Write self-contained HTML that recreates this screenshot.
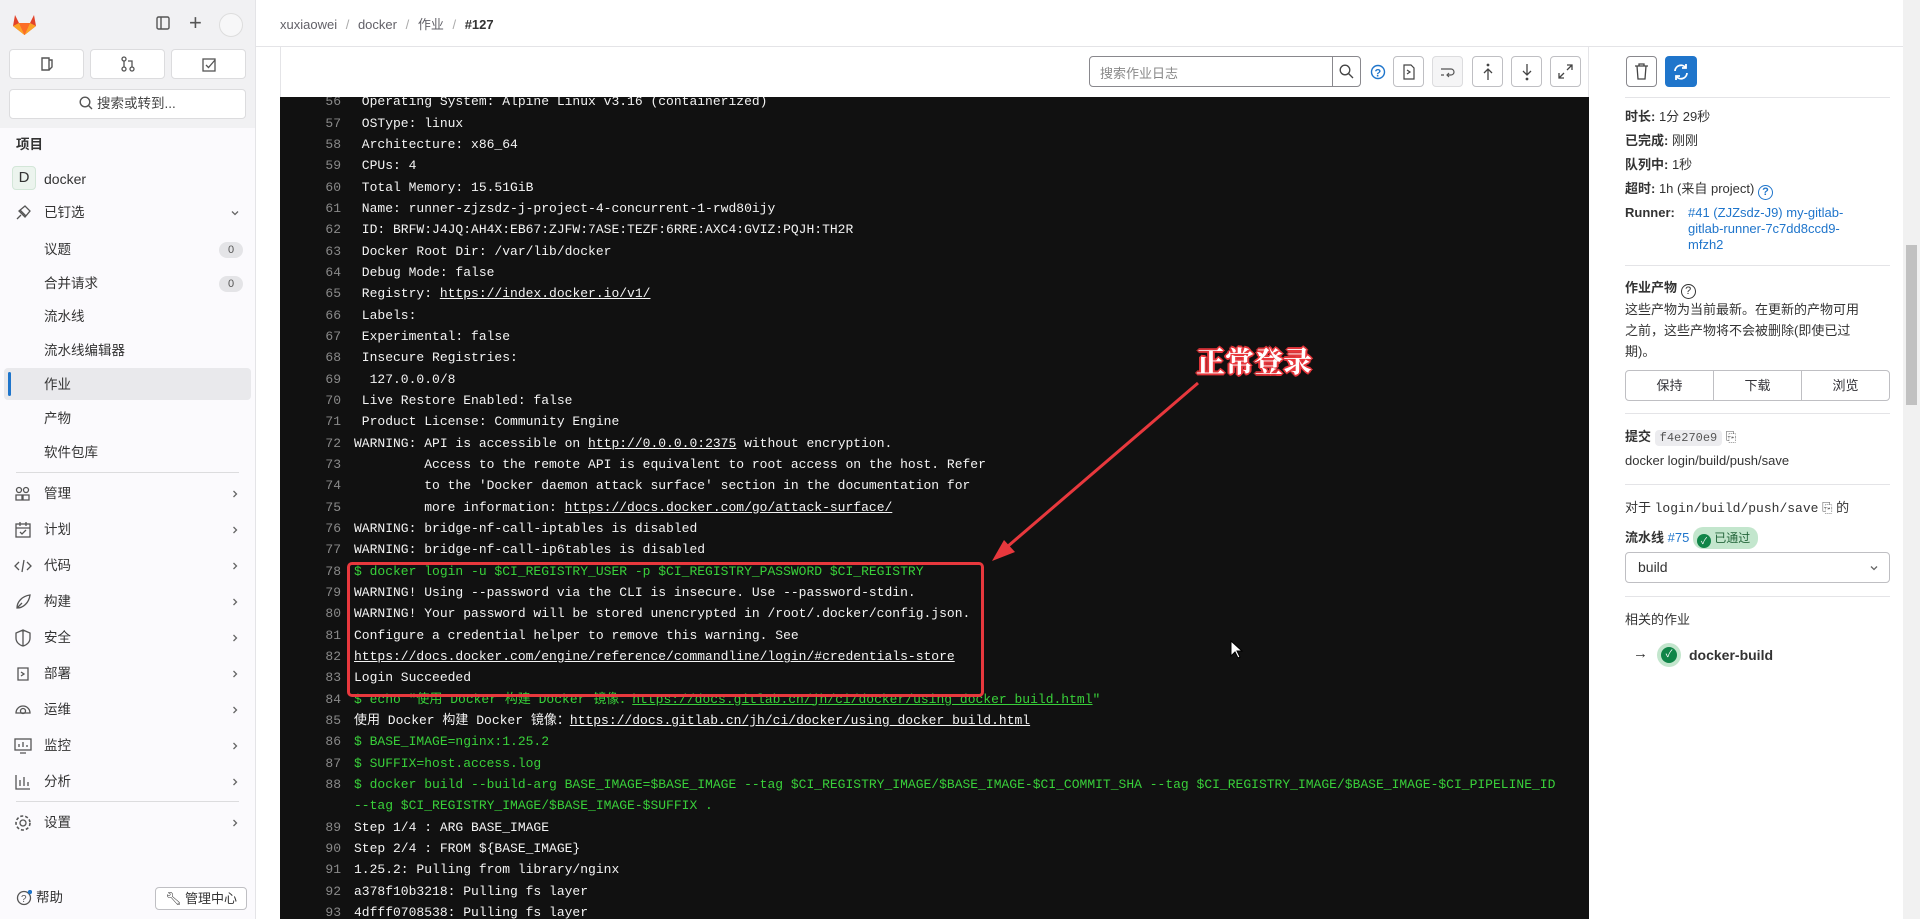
<!DOCTYPE html>
<html><head><meta charset="utf-8">
<style>
*{box-sizing:border-box;margin:0;padding:0}
body{width:1920px;height:919px;overflow:hidden;background:#fff;font-family:"Liberation Sans","Noto Sans CJK SC",sans-serif;color:#333238;font-size:14px;position:relative}
.abs{position:absolute}
#side{left:0;top:0;width:256px;height:919px;background:#fbfafd;border-right:1px solid #e4e4e7}
#sidetop{left:0;top:0;width:255px;height:128px;background:#f1f1f3}
.btn3{position:absolute;top:49px;height:30px;width:75px;background:#fff;border:1px solid #dcdcde;border-radius:4px}
.nav{position:absolute;left:44px;font-size:13.5px;color:#333;line-height:20px}
.ico{position:absolute;left:14px;width:18px;height:18px}
.chev{position:absolute;left:230px;width:10px;height:10px}
.badge{position:absolute;left:219px;width:24px;height:16px;border-radius:8px;background:#e4e4e7;font-size:11px;text-align:center;line-height:16px;color:#555}
#log{left:280px;top:97px;width:1309px;height:822px;background:#111;overflow:hidden;font-family:"Liberation Mono","Noto Sans CJK SC",monospace;font-size:13px;color:#f4f4f4}
.l{position:absolute;left:0;height:21.33px;line-height:21.33px;white-space:pre;width:1309px}
.n{position:absolute;left:0;width:61px;text-align:right;color:#8a8a8a}
.t{position:absolute;left:74px}
.g{color:#39d03a}
u{text-decoration:underline}
.tb{position:absolute;top:56px;width:31px;height:31px;border:1px solid #bfbfc3;border-radius:4px;background:#fff}
.rp{position:absolute;left:1625px;font-size:13px;color:#333;line-height:20px}
.div{position:absolute;left:1625px;width:265px;height:1px;background:#e4e4e7}
</style></head><body>
<div id="side" class="abs"></div>
<div id="sidetop" class="abs"></div>
<svg class="abs" style="left:12px;top:12px" width="25" height="24" viewBox="0 0 25 24"><path d="M12.5 23 L1 14 L3 3 L7 11 H18 L22 3 L24 14Z" fill="#e24329"/><path d="M12.5 23 L7 11 H18Z" fill="#fc6d26"/><path d="M1 14 L7 11 L12.5 23Z M24 14 L18 11 L12.5 23Z" fill="#fca326"/></svg>
<svg class="abs" style="left:156px;top:16px" width="14" height="14"><rect x="1" y="1" width="12" height="12" rx="1.5" fill="none" stroke="#555" stroke-width="1.4"/><line x1="5" y1="1" x2="5" y2="13" stroke="#555" stroke-width="1.4"/></svg>
<div class="abs" style="left:189px;top:10px;font-size:22px;color:#555">+</div>
<div class="abs" style="left:219px;top:13px;width:24px;height:24px;border-radius:50%;border:1px solid #ddd;background:#f7f7f8"></div>
<div class="btn3" style="left:9px"></div><div class="btn3" style="left:90px"></div><div class="btn3" style="left:171px"></div>
<svg class="abs" style="left:40px;top:56px" width="14" height="16"><path d="M2 2h7v12H2z M9 4h3v7l-3 3" fill="none" stroke="#555" stroke-width="1.4"/></svg>
<svg class="abs" style="left:121px;top:56px" width="14" height="16"><circle cx="3" cy="3" r="2" fill="none" stroke="#555" stroke-width="1.3"/><circle cx="3" cy="13" r="2" fill="none" stroke="#555" stroke-width="1.3"/><circle cx="11" cy="13" r="2" fill="none" stroke="#555" stroke-width="1.3"/><path d="M3 5v6 M11 11V5H7" fill="none" stroke="#555" stroke-width="1.3"/></svg>
<svg class="abs" style="left:202px;top:57px" width="15" height="15"><rect x="1" y="2" width="12" height="12" fill="none" stroke="#555" stroke-width="1.3"/><path d="M4 8l2.5 2.5L13 3" fill="none" stroke="#555" stroke-width="1.3"/></svg>
<div class="abs" style="left:9px;top:89px;width:237px;height:30px;background:#fff;border:1px solid #dcdcde;border-radius:4px;text-align:center;line-height:28px;font-size:13.5px;color:#444">
<svg width="14" height="14" style="vertical-align:-2px"><circle cx="6" cy="6" r="4.8" fill="none" stroke="#555" stroke-width="1.4"/><line x1="9.5" y1="9.5" x2="13" y2="13" stroke="#555" stroke-width="1.4"/></svg> 搜索或转到...</div>
<div class="nav" style="left:16px;top:135px;font-weight:bold;color:#333">项目</div>
<div class="abs" style="left:12px;top:166px;width:24px;height:24px;border-radius:4px;background:#ecf4ee;border:1px solid #d3e6d8;text-align:center;line-height:22px;font-size:15px;color:#333">D</div>
<div class="nav" style="top:169px;font-size:14px">docker</div>
<svg class="ico" style="top:204px" viewBox="0 0 18 18"><path d="M3 15l4-4 M6 6l6 6 M5 7l6-5 5 5-5 6z" fill="none" stroke="#555" stroke-width="1.3"/></svg>
<div class="nav" style="top:203px">已钉选</div>
<svg class="chev" style="top:208px" viewBox="0 0 10 10"><path d="M2 3.5l3 3 3-3" fill="none" stroke="#666" stroke-width="1.3"/></svg>
<div class="nav" style="top:240px">议题</div><div class="badge" style="top:242px">0</div>
<div class="nav" style="top:274px">合并请求</div><div class="badge" style="top:276px">0</div>
<div class="nav" style="top:307px">流水线</div>
<div class="nav" style="top:341px">流水线编辑器</div>
<div class="abs" style="left:4px;top:368px;width:247px;height:32px;background:#e9e9ec;border-radius:4px"></div>
<div class="abs" style="left:8px;top:372px;width:3px;height:24px;background:#1f75cb;border-radius:2px"></div>
<div class="nav" style="top:375px">作业</div>
<div class="nav" style="top:409px">产物</div>
<div class="nav" style="top:443px">软件包库</div>
<div class="abs" style="left:16px;top:472px;width:223px;height:1px;background:#dcdcde"></div>
<div class="nav" style="top:484px">管理</div>
<div class="nav" style="top:520px">计划</div>
<div class="nav" style="top:556px">代码</div>
<div class="nav" style="top:592px">构建</div>
<div class="nav" style="top:628px">安全</div>
<div class="nav" style="top:664px">部署</div>
<div class="nav" style="top:700px">运维</div>
<div class="nav" style="top:736px">监控</div>
<div class="nav" style="top:772px">分析</div>
<div class="abs" style="left:16px;top:801px;width:223px;height:1px;background:#dcdcde"></div>
<div class="nav" style="top:813px">设置</div>
<svg class="chev" style="top:489px" viewBox="0 0 10 10"><path d="M3.5 2l3 3-3 3" fill="none" stroke="#666" stroke-width="1.3"/></svg>
<svg class="chev" style="top:525px" viewBox="0 0 10 10"><path d="M3.5 2l3 3-3 3" fill="none" stroke="#666" stroke-width="1.3"/></svg>
<svg class="chev" style="top:561px" viewBox="0 0 10 10"><path d="M3.5 2l3 3-3 3" fill="none" stroke="#666" stroke-width="1.3"/></svg>
<svg class="chev" style="top:597px" viewBox="0 0 10 10"><path d="M3.5 2l3 3-3 3" fill="none" stroke="#666" stroke-width="1.3"/></svg>
<svg class="chev" style="top:633px" viewBox="0 0 10 10"><path d="M3.5 2l3 3-3 3" fill="none" stroke="#666" stroke-width="1.3"/></svg>
<svg class="chev" style="top:669px" viewBox="0 0 10 10"><path d="M3.5 2l3 3-3 3" fill="none" stroke="#666" stroke-width="1.3"/></svg>
<svg class="chev" style="top:705px" viewBox="0 0 10 10"><path d="M3.5 2l3 3-3 3" fill="none" stroke="#666" stroke-width="1.3"/></svg>
<svg class="chev" style="top:741px" viewBox="0 0 10 10"><path d="M3.5 2l3 3-3 3" fill="none" stroke="#666" stroke-width="1.3"/></svg>
<svg class="chev" style="top:777px" viewBox="0 0 10 10"><path d="M3.5 2l3 3-3 3" fill="none" stroke="#666" stroke-width="1.3"/></svg>
<svg class="chev" style="top:818px" viewBox="0 0 10 10"><path d="M3.5 2l3 3-3 3" fill="none" stroke="#666" stroke-width="1.3"/></svg>
<svg class="ico" style="top:485px" viewBox="0 0 18 18"><circle cx="5" cy="5" r="2.5" fill="none" stroke="#555" stroke-width="1.3"/><circle cx="12" cy="5" r="2.5" fill="none" stroke="#555" stroke-width="1.3"/><path d="M2 15v-5h6v5z M9 15v-5h6v5z" fill="none" stroke="#555" stroke-width="1.3"/></svg>
<svg class="ico" style="top:521px" viewBox="0 0 18 18"><rect x="2" y="3" width="14" height="13" fill="none" stroke="#555" stroke-width="1.3"/><path d="M2 7h14 M6 1v4 M12 1v4 M6 11l2 2 4-4" fill="none" stroke="#555" stroke-width="1.3"/></svg>
<svg class="ico" style="top:557px" viewBox="0 0 18 18"><path d="M5 5L1 9l4 4 M13 5l4 4-4 4 M10 3L8 15" fill="none" stroke="#555" stroke-width="1.3"/></svg>
<svg class="ico" style="top:593px" viewBox="0 0 18 18"><path d="M3 15c0-6 5-12 13-13-1 8-7 13-13 13z M3 15l5-5" fill="none" stroke="#555" stroke-width="1.3"/></svg>
<svg class="ico" style="top:629px" viewBox="0 0 18 18"><path d="M9 1l7 3v5c0 4-3 7-7 8-4-1-7-4-7-8V4z M9 1v16" fill="none" stroke="#555" stroke-width="1.3"/></svg>
<svg class="ico" style="top:665px" viewBox="0 0 18 18"><path d="M4 3h10v12H4z M7 7l3 2-3 2" fill="none" stroke="#555" stroke-width="1.3"/></svg>
<svg class="ico" style="top:701px" viewBox="0 0 18 18"><path d="M2 12a7 7 0 0 1 14 0z" fill="none" stroke="#555" stroke-width="1.3"/><circle cx="9" cy="10" r="2.5" fill="none" stroke="#555" stroke-width="1.3"/></svg>
<svg class="ico" style="top:737px" viewBox="0 0 18 18"><rect x="1" y="2" width="16" height="11" fill="none" stroke="#555" stroke-width="1.3"/><path d="M5 10V7 M9 10V5 M13 10V8 M6 16h6" fill="none" stroke="#555" stroke-width="1.3"/></svg>
<svg class="ico" style="top:773px" viewBox="0 0 18 18"><path d="M2 2v14h14 M6 13V7 M10 13V4 M14 13V9" fill="none" stroke="#555" stroke-width="1.3"/></svg>
<svg class="ico" style="top:814px" viewBox="0 0 18 18"><circle cx="9" cy="9" r="3" fill="none" stroke="#555" stroke-width="1.3"/><circle cx="9" cy="9" r="7" fill="none" stroke="#555" stroke-width="1.6" stroke-dasharray="3 2"/></svg>
<svg class="abs" style="left:16px;top:890px" width="16" height="16"><circle cx="8" cy="8" r="6.5" fill="none" stroke="#555" stroke-width="1.3"/><text x="5" y="12" font-size="10" fill="#555">?</text><circle cx="14" cy="2" r="2.2" fill="#1f75cb"/></svg>
<div class="nav" style="left:36px;top:888px">帮助</div>
<div class="abs" style="left:155px;top:887px;width:92px;height:23px;border:1px solid #bfbfc3;border-radius:4px;background:#fff;font-size:13px;text-align:center;line-height:21px;color:#333">🔧︎ 管理中心</div>

<!-- header -->
<div class="abs" style="left:256px;top:46px;width:1664px;height:1px;background:#e4e4e7"></div>
<div class="abs" style="left:280px;top:14px;font-size:13px;color:#626168">xuxiaowei <span style="color:#aaa;margin:0 5px">/</span> docker <span style="color:#aaa;margin:0 5px">/</span> 作业 <span style="color:#aaa;margin:0 5px">/</span> <b style="color:#333">#127</b></div>
<div class="abs" style="left:280px;top:47px;width:1309px;height:50px;border-left:1px solid #e4e4e7;border-right:1px solid #e4e4e7"></div>
<div class="abs" style="left:1089px;top:56px;width:272px;height:31px;border:1px solid #89888d;border-radius:4px;background:#fff"></div>
<div class="abs" style="left:1100px;top:63px;font-size:13px;color:#888">搜索作业日志</div>
<div class="abs" style="left:1332px;top:56px;width:1px;height:31px;background:#89888d"></div>
<svg class="abs" style="left:1339px;top:64px" width="15" height="15"><circle cx="6" cy="6" r="4.8" fill="none" stroke="#444" stroke-width="1.3"/><line x1="9.5" y1="9.5" x2="14" y2="14" stroke="#444" stroke-width="1.3"/></svg>
<svg class="abs" style="left:1370px;top:64px" width="16" height="16"><circle cx="8" cy="8" r="6.5" fill="none" stroke="#1f75cb" stroke-width="1.4"/><text x="4.5" y="12.5" font-size="11" font-weight="bold" fill="#1f75cb" font-family="Liberation Sans">?</text></svg>
<div class="tb" style="left:1393px"></div><div class="tb" style="left:1432px;background:#f5f5f6;border-color:#dcdcde"></div><div class="tb" style="left:1472px"></div><div class="tb" style="left:1511px"></div><div class="tb" style="left:1550px"></div>
<svg class="abs" style="left:1402px;top:64px" width="14" height="16"><path d="M2 1h7l3 3v11H2z M5 6l3 2-3 2" fill="none" stroke="#444" stroke-width="1.2"/></svg>
<svg class="abs" style="left:1440px;top:64px" width="16" height="16"><path d="M1 5h10a3 3 0 0 1 0 6H7 M9 9l-2 2 2 2 M1 11h3" fill="none" stroke="#555" stroke-width="1.2"/></svg>
<svg class="abs" style="left:1481px;top:63px" width="14" height="18"><circle cx="7" cy="2" r="1.4" fill="#444"/><path d="M7 17V6 M3 10l4-4 4 4" fill="none" stroke="#444" stroke-width="1.3"/></svg>
<svg class="abs" style="left:1520px;top:63px" width="14" height="18"><circle cx="7" cy="16" r="1.4" fill="#444"/><path d="M7 1v11 M3 8l4 4 4-4" fill="none" stroke="#444" stroke-width="1.3"/></svg>
<svg class="abs" style="left:1558px;top:64px" width="15" height="15"><path d="M9 1h5v5 M14 1L9 6 M6 14H1V9 M1 14l5-5" fill="none" stroke="#444" stroke-width="1.3"/></svg>

<div id="log" class="abs">
<div style="position:absolute;left:0;top:-5.7px">
<div class="l" style="top:0px"><span class="n">56</span><span class="t"> Operating System: Alpine Linux v3.16 (containerized)</span></div>
<div class="l" style="top:21.33px"><span class="n">57</span><span class="t"> OSType: linux</span></div>
<div class="l" style="top:42.66px"><span class="n">58</span><span class="t"> Architecture: x86_64</span></div>
<div class="l" style="top:64px"><span class="n">59</span><span class="t"> CPUs: 4</span></div>
<div class="l" style="top:85.33px"><span class="n">60</span><span class="t"> Total Memory: 15.51GiB</span></div>
<div class="l" style="top:106.66px"><span class="n">61</span><span class="t"> Name: runner-zjzsdz-j-project-4-concurrent-1-rwd80ijy</span></div>
<div class="l" style="top:128px"><span class="n">62</span><span class="t"> ID: BRFW:J4JQ:AH4X:EB67:ZJFW:7ASE:TEZF:6RRE:AXC4:GVIZ:PQJH:TH2R</span></div>
<div class="l" style="top:149.33px"><span class="n">63</span><span class="t"> Docker Root Dir: /var/lib/docker</span></div>
<div class="l" style="top:170.66px"><span class="n">64</span><span class="t"> Debug Mode: false</span></div>
<div class="l" style="top:192px"><span class="n">65</span><span class="t"> Registry: <u>https://index.docker.io/v1/</u></span></div>
<div class="l" style="top:213.33px"><span class="n">66</span><span class="t"> Labels:</span></div>
<div class="l" style="top:234.66px"><span class="n">67</span><span class="t"> Experimental: false</span></div>
<div class="l" style="top:256px"><span class="n">68</span><span class="t"> Insecure Registries:</span></div>
<div class="l" style="top:277.33px"><span class="n">69</span><span class="t">  127.0.0.0/8</span></div>
<div class="l" style="top:298.66px"><span class="n">70</span><span class="t"> Live Restore Enabled: false</span></div>
<div class="l" style="top:320px"><span class="n">71</span><span class="t"> Product License: Community Engine</span></div>
<div class="l" style="top:341.33px"><span class="n">72</span><span class="t">WARNING: API is accessible on <u>http://0.0.0.0:2375</u> without encryption.</span></div>
<div class="l" style="top:362.66px"><span class="n">73</span><span class="t">         Access to the remote API is equivalent to root access on the host. Refer</span></div>
<div class="l" style="top:384px"><span class="n">74</span><span class="t">         to the 'Docker daemon attack surface' section in the documentation for</span></div>
<div class="l" style="top:405.33px"><span class="n">75</span><span class="t">         more information: <u>https://docs.docker.com/go/attack-surface/</u></span></div>
<div class="l" style="top:426.66px"><span class="n">76</span><span class="t">WARNING: bridge-nf-call-iptables is disabled</span></div>
<div class="l" style="top:448px"><span class="n">77</span><span class="t">WARNING: bridge-nf-call-ip6tables is disabled</span></div>
<div class="l" style="top:469.33px"><span class="n">78</span><span class="t g">$ docker login -u $CI_REGISTRY_USER -p $CI_REGISTRY_PASSWORD $CI_REGISTRY</span></div>
<div class="l" style="top:490.66px"><span class="n">79</span><span class="t">WARNING! Using --password via the CLI is insecure. Use --password-stdin.</span></div>
<div class="l" style="top:512px"><span class="n">80</span><span class="t">WARNING! Your password will be stored unencrypted in /root/.docker/config.json.</span></div>
<div class="l" style="top:533.33px"><span class="n">81</span><span class="t">Configure a credential helper to remove this warning. See</span></div>
<div class="l" style="top:554.66px"><span class="n">82</span><span class="t"><u>https://docs.docker.com/engine/reference/commandline/login/#credentials-store</u></span></div>
<div class="l" style="top:576px"><span class="n">83</span><span class="t">Login Succeeded</span></div>
<div class="l" style="top:597.33px"><span class="n">84</span><span class="t g">$ echo "使用 Docker 构建 Docker 镜像：<u>https://docs.gitlab.cn/jh/ci/docker/using_docker_build.html</u>"</span></div>
<div class="l" style="top:618.66px"><span class="n">85</span><span class="t">使用 Docker 构建 Docker 镜像：<u>https://docs.gitlab.cn/jh/ci/docker/using_docker_build.html</u></span></div>
<div class="l" style="top:640px"><span class="n">86</span><span class="t g">$ BASE_IMAGE=nginx:1.25.2</span></div>
<div class="l" style="top:661.33px"><span class="n">87</span><span class="t g">$ SUFFIX=host.access.log</span></div>
<div class="l" style="top:682.66px"><span class="n">88</span><span class="t g">$ docker build --build-arg BASE_IMAGE=$BASE_IMAGE --tag $CI_REGISTRY_IMAGE/$BASE_IMAGE-$CI_COMMIT_SHA --tag $CI_REGISTRY_IMAGE/$BASE_IMAGE-$CI_PIPELINE_ID</span></div>
<div class="l" style="top:704px"><span class="t g">--tag $CI_REGISTRY_IMAGE/$BASE_IMAGE-$SUFFIX .</span></div>
<div class="l" style="top:725.33px"><span class="n">89</span><span class="t">Step 1/4 : ARG BASE_IMAGE</span></div>
<div class="l" style="top:746.66px"><span class="n">90</span><span class="t">Step 2/4 : FROM ${BASE_IMAGE}</span></div>
<div class="l" style="top:768px"><span class="n">91</span><span class="t">1.25.2: Pulling from library/nginx</span></div>
<div class="l" style="top:789.33px"><span class="n">92</span><span class="t">a378f10b3218: Pulling fs layer</span></div>
<div class="l" style="top:810.66px"><span class="n">93</span><span class="t">4dfff0708538: Pulling fs layer</span></div>
</div>
</div>

<!-- annotation -->
<div class="abs" style="left:347px;top:562px;width:637px;height:135px;border:3px solid #e8383d;border-radius:5px"></div>
<svg class="abs" style="left:0;top:0" width="1920" height="919"><line x1="1198" y1="383" x2="1000" y2="553" stroke="#e8383d" stroke-width="3"/><path d="M992 561 L1004 540 L1015 552Z" fill="#e8383d"/></svg>
<div class="abs" style="left:1196px;top:340px;font-size:29px;font-weight:bold;font-family:'Noto Serif CJK SC','Noto Sans CJK SC',serif;color:#fff;text-shadow:0 0 2px #e8383d,0 0 2px #e8383d,1px 1px 0 #e8383d,-1px -1px 0 #e8383d,1px -1px 0 #e8383d,-1px 1px 0 #e8383d,2px 0 0 #e8383d,-2px 0 0 #e8383d,0 2px 0 #e8383d,0 -2px 0 #e8383d">正常登录</div>
<svg class="abs" style="left:1230px;top:640px" width="14" height="20"><path d="M1 1v15l4-4 3 6 2-1-3-6h5z" fill="#fff" stroke="#000" stroke-width="1"/></svg>

<!-- right panel -->
<div class="abs" style="left:1626px;top:56px;width:31px;height:31px;border:1px solid #89888d;border-radius:4px;background:#fff"></div>
<svg class="abs" style="left:1634px;top:63px" width="15" height="17"><path d="M1 3h13 M5 3V1h5v2 M3 3l1 13h7l1-13" fill="none" stroke="#444" stroke-width="1.3"/></svg>
<div class="abs" style="left:1665px;top:56px;width:32px;height:31px;border-radius:4px;background:#1f75cb"></div>
<svg class="abs" style="left:1672px;top:63px" width="18" height="18"><path d="M3 8a6 6 0 0 1 11-3 M15 10a6 6 0 0 1-11 3 M14 1v4h-4 M4 17v-4h4" fill="none" stroke="#fff" stroke-width="1.8"/></svg>
<div class="div" style="top:97px"></div>
<div class="rp" style="top:107px"><b>时长:</b> 1分 29秒</div>
<div class="rp" style="top:131px"><b>已完成:</b> 刚刚</div>
<div class="rp" style="top:155px"><b>队列中:</b> 1秒</div>
<div class="rp" style="top:179px"><b>超时:</b> 1h (来自 project) <span style="display:inline-block;width:15px;height:15px;border:1.5px solid #1f75cb;border-radius:50%;color:#1f75cb;font-size:11px;text-align:center;line-height:12px;font-weight:bold;vertical-align:-2px">?</span></div>
<div class="rp" style="top:205px;line-height:16px"><b>Runner:</b></div>
<div class="rp" style="left:1688px;top:205px;line-height:16px;color:#1f75cb;width:200px">#41 (ZJZsdz-J9) my-gitlab-<br>gitlab-runner-7c7dd8ccd9-<br>mfzh2</div>
<div class="div" style="top:265px"></div>
<div class="rp" style="top:278px"><b>作业产物</b> <span style="display:inline-block;width:15px;height:15px;border:1.5px solid #333;border-radius:50%;font-size:11px;text-align:center;line-height:12px;vertical-align:-2px">?</span></div>
<div class="rp" style="top:299px;line-height:21px;width:262px">这些产物为当前最新。在更新的产物可用<br>之前，这些产物将不会被删除(即使已过<br>期)。</div>
<div class="abs" style="left:1625px;top:370px;width:265px;height:31px;border:1px solid #bfbfc3;border-radius:4px;display:flex;font-size:13px">
<div style="flex:1;text-align:center;line-height:29px;border-right:1px solid #bfbfc3">保持</div><div style="flex:1;text-align:center;line-height:29px;border-right:1px solid #bfbfc3">下载</div><div style="flex:1;text-align:center;line-height:29px">浏览</div></div>
<div class="div" style="top:413px"></div>
<div class="rp" style="top:427px"><b>提交</b> <span style="background:#ececef;border-radius:4px;padding:1px 5px;font-family:'Liberation Mono',monospace;font-size:12px;color:#555">f4e270e9</span> <span style="color:#555">⎘</span></div>
<div class="rp" style="top:451px">docker login/build/push/save</div>
<div class="div" style="top:484px"></div>
<div class="rp" style="top:498px">对于 <span style="font-family:'Liberation Mono',monospace">login/build/push/save</span> <span style="color:#555">⎘</span> 的</div>
<div class="rp" style="top:527px"><b>流水线</b> <span style="color:#1f75cb">#75</span> <span style="display:inline-block;background:#c3e6cd;border-radius:10px;padding:0 8px 0 4px;height:22px;line-height:22px;color:#24663b;font-size:12px"><span style="display:inline-block;width:14px;height:14px;border-radius:50%;background:#108548;color:#fff;font-size:9px;text-align:center;line-height:14px;vertical-align:-2px">✓</span> 已通过</span></div>
<div class="abs" style="left:1625px;top:552px;width:265px;height:31px;border:1px solid #bfbfc3;border-radius:4px;font-size:14px;line-height:29px;padding-left:12px;color:#333">build<svg style="position:absolute;right:10px;top:10px" width="10" height="10"><path d="M2 3.5l3 3 3-3" fill="none" stroke="#666" stroke-width="1.3"/></svg></div>
<div class="div" style="top:596px"></div>
<div class="rp" style="top:610px">相关的作业</div>
<div class="rp" style="left:1633px;top:644px;font-size:15px">→</div>
<div class="abs" style="left:1657px;top:643px;width:24px;height:24px;border-radius:50%;background:#c3e6cd"></div>
<div class="abs" style="left:1661px;top:647px;width:16px;height:16px;border-radius:50%;background:#108548;color:#fff;font-size:10px;text-align:center;line-height:16px">✓</div>
<div class="rp" style="left:1689px;top:645px;font-weight:bold;font-size:14px">docker-build</div>
<div class="abs" style="left:1903px;top:0;width:17px;height:919px;background:#f1f1f1"></div>
<div class="abs" style="left:1906px;top:245px;width:11px;height:160px;background:#c1c1c1"></div>
</body></html>
